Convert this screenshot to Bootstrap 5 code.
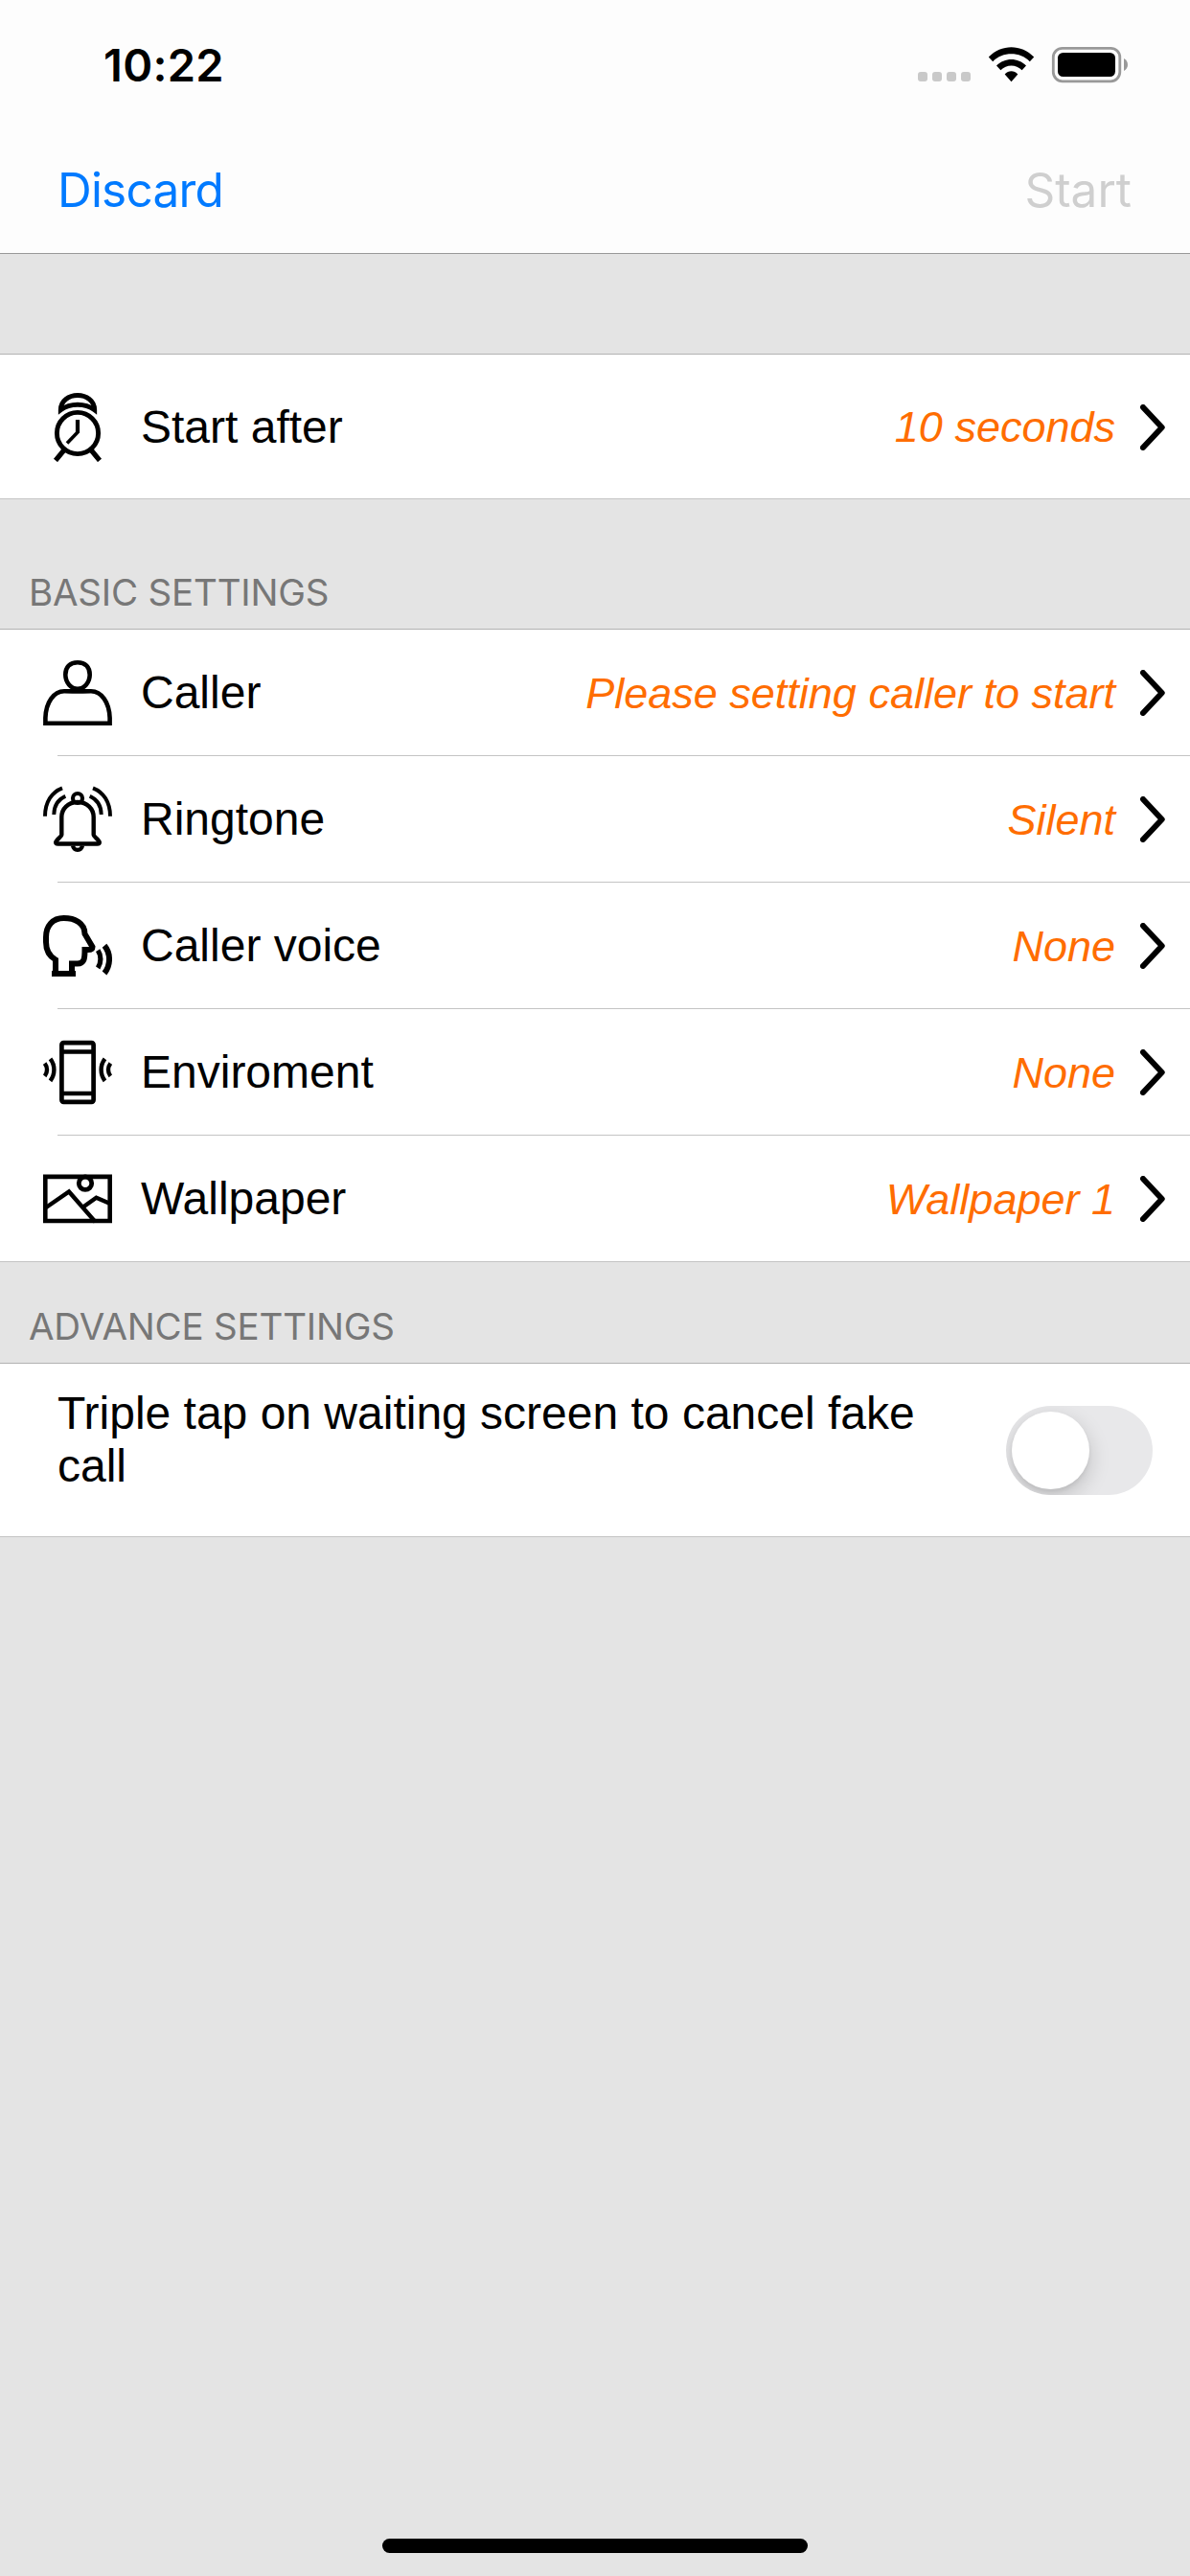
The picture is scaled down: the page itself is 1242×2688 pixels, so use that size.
<!DOCTYPE html>
<html lang="en">
<head>
<meta charset="utf-8">
<meta name="viewport" content="width=device-width, initial-scale=1">
<title>Fake Call</title>
<link href="https://cdn.jsdelivr.net/npm/bootstrap@5.3.0/dist/css/bootstrap.min.css" rel="stylesheet">
<style>
body{background:#e4e4e4;font-family:"Liberation Sans",Arial,sans-serif;color:#000;font-size:48px;line-height:55px}
.screen{width:1242px;height:2688px;overflow:hidden}
.top-area{height:265px;background:#fdfdfd;border-bottom:1px solid #999;font-family:Inter,sans-serif}
.status{height:132px;padding:0 64px 0 108px}
.clock-time{font-size:47px;font-weight:600;line-height:56px;padding-top:40px;letter-spacing:.3px}
.status svg{display:block;margin-top:43px}
.actions{height:132px;padding:0 61px 0 60px;font-size:49.5px;line-height:60px}
.actions button{padding-top:36px;line-height:60px;border:0;background:none}
.discard{color:#007aff;letter-spacing:-.8px}
.start{color:#cfcfcf}
.group-box{background:#fff;border-top:1px solid #b2b2b2;border-bottom:1px solid #c4c4c4}
.gap-top{margin-top:104px}
.item{height:131px;padding:0 26px 0 45px}
.item.tall{height:150px}
.item svg{flex:none;fill:none;stroke:#000}
.ico{margin-top:1px}
.tall .ico{margin-top:2px}
.chev{margin-top:1px;margin-left:26px}
.tall .chev{margin-top:2px}
.item-label{margin-left:30px;white-space:nowrap}
.item-value{color:#ff6d00;font-style:italic;font-size:45px;line-height:52px;white-space:nowrap;padding-top:2px}
.rule{height:1px;margin-left:60px;background:#c4c4c4}
.section-title{font:400 38.5px/46px Inter,sans-serif;letter-spacing:-.2px;color:#777;padding:0 0 0 30px;margin:0;white-space:nowrap}
.title-basic{height:135px;padding-top:74px}
.title-advance{height:105px;padding-top:44px}
.toggle-row{height:180px;padding:24px 39px 0 60px}
.toggle-row p{width:920px}
.toggle{width:153px;height:93px;border-radius:47px;background:#e8e8ea;padding:6px;margin-top:20px;overflow:hidden}
.knob{width:81px;height:81px;border-radius:50%;background:#fff;box-shadow:0 8px 22px rgba(0,0,0,.18),0 3px 4px rgba(0,0,0,.06)}
.home-bar{width:444px;height:15px;border-radius:8px;background:#000;margin-bottom:24px}
</style>
<script src="https://cdn.jsdelivr.net/npm/bootstrap@5.3.0/dist/js/bootstrap.bundle.min.js"></script>
</head>
<body>
<svg width="0" height="0" class="d-none">
  <symbol id="chev" viewBox="0 0 26 48"><path d="M3 3 22.700 24 3 45" stroke-width="6" stroke-linecap="round" stroke-linejoin="round"/></symbol>
</svg>
<div class="screen d-flex flex-column">
  <header class="top-area">
    <div class="status d-flex justify-content-between">
      <div class="clock-time">10:22</div>
      <svg width="222" height="50" viewBox="956 43 222 50">
        <g fill="#c9c9c9"><rect x="958" y="75" width="10" height="10" rx="3"/><rect x="973" y="75" width="10" height="10" rx="3"/><rect x="988" y="75" width="10" height="10" rx="3"/><rect x="1003" y="75" width="10" height="10" rx="3"/></g>
        <path d="M1031.800 59.500C1045 45.700 1066 45.700 1079.200 59.500L1074.800 64.300C1064.500 53.700 1046.500 53.700 1036.200 64.300Z"/>
        <path d="M1040 68.500C1048.500 59.700 1062.500 59.700 1071 68.500L1066.600 73.300C1060.500 67 1050.500 67 1044.400 73.300Z"/>
        <path d="M1048.700 77.600C1052.600 73.200 1058.400 73.200 1062.300 77.600L1055.500 85.300Z"/>
        <rect x="1099.300" y="50.300" width="69.500" height="34.500" rx="9.500" fill="none" stroke="#999" stroke-width="2.800"/>
        <rect x="1104" y="55" width="60" height="25" rx="5.500"/>
        <path d="M1173 61C1178.300 63.500 1178.300 71.500 1173 74Z" fill="#999"/>
      </svg>
    </div>
    <div class="actions d-flex justify-content-between align-items-start">
      <button class="discard pe-0 ps-0 pb-0" type="button">Discard</button>
      <button class="start pe-0 ps-0 pb-0" type="button" disabled>Start</button>
    </div>
  </header>

  <section class="group-box gap-top">
    <div class="item tall d-flex align-items-center">
      <svg class="ico" width="72" height="72" viewBox="0 0 72 72" stroke-width="4.900">
        <circle cx="36" cy="42" r="21.600"/>
        <path d="M18.300 17.800C18.300 8 27 2.500 36 2.500S53.700 8 53.700 17.800C48 13.500 42 12.200 36 12.200S24 13.500 18.300 17.800Z"/>
        <path d="M36 28V41" stroke-width="4.200"/><path d="M37 40 25 52.500" stroke-width="3.600"/>
        <path d="M22 59.500 13 70.500M50 59.500 59 70.500" stroke-width="5.200"/>
      </svg>
      <span class="item-label">Start after</span>
      <span class="item-value ms-auto">10 seconds</span>
      <svg class="chev" width="26" height="48"><use href="#chev"/></svg>
    </div>
  </section>

  <h2 class="section-title title-basic">BASIC SETTINGS</h2>
  <section class="group-box">
    <div class="item d-flex align-items-center">
      <svg class="ico" width="72" height="72" viewBox="0 0 72 72" stroke-width="4.600">
        <path d="M36 4.200C28 4.200 23.300 9 23.300 17 23.300 25 29 31.800 36 31.800S48.700 25 48.700 17C48.700 9 44 4.200 36 4.200Z"/>
        <path d="M2.400 67.800V62C3 46 11 34.300 22 34.300 28 34.300 32 34.500 36 34.500S44 34.300 50 34.300C61 34.300 69 46 69.600 62V67.800Z"/>
      </svg>
      <span class="item-label">Caller</span>
      <span class="item-value ms-auto">Please setting caller to start</span>
      <svg class="chev" width="26" height="48"><use href="#chev"/></svg>
    </div>
    <div class="rule"></div>
    <div class="item d-flex align-items-center">
      <svg class="ico" width="72" height="72" viewBox="0 0 72 72" stroke-width="4.400">
        <path d="M20 3.300C9 7.500 2 18 2 32.700M52 3.300C63 7.500 70 18 70 32.700" stroke-width="4"/>
        <path d="M23.300 11.700C16 15 11.300 22 11.300 31M48.700 11.700C56 15 60.700 22 60.700 31" stroke-width="3.900"/>
        <circle cx="36" cy="14" r="5" stroke-width="4.200"/>
        <path d="M36 18C26 18 19.300 25 19.300 33.500V52C19.300 54 13.200 57.500 13.200 60 13.200 61.300 14 61.500 15.500 61.500H56.500C58 61.500 58.800 61.300 58.800 60 58.800 57.500 52.700 54 52.700 52V33.500C52.700 25 46 18 36 18Z"/>
        <path d="M31 63.500C32 69.300 40 69.300 41 63.500" stroke-width="4.200"/>
      </svg>
      <span class="item-label">Ringtone</span>
      <span class="item-value ms-auto">Silent</span>
      <svg class="chev" width="26" height="48"><use href="#chev"/></svg>
    </div>
    <div class="rule"></div>
    <div class="item d-flex align-items-center">
      <svg class="ico" width="72" height="72" viewBox="0 0 72 72" stroke-width="6">
        <path d="M9 65H34M13 65V50.500C6 46.500 3 41 3 32V27C3 15 10 7 21.500 7 33 7 43.500 12 43.500 23.500L51.500 37C51.500 39.500 50 40 47 40H43.500C43.500 49 43 54.500 36 54.500H30V65"/>
        <path d="M57.200 40.600C60.800 46 60.800 53.500 57.200 59" stroke-width="5.200"/><path d="M64 35.800C70.700 43.800 70.700 56.200 64 64.500" stroke-width="6"/>
      </svg>
      <span class="item-label">Caller voice</span>
      <span class="item-value ms-auto">None</span>
      <svg class="chev" width="26" height="48"><use href="#chev"/></svg>
    </div>
    <div class="rule"></div>
    <div class="item d-flex align-items-center">
      <svg class="ico" width="72" height="72" viewBox="0 0 72 72" stroke-width="4.700">
        <rect x="19.400" y="5.200" width="33.200" height="61.600" rx="2"/>
        <path d="M19 14.500H53M19 58H53"/>
        <path d="M7.500 21.800C12.700 28.500 12.700 38 7.500 44.800M64.500 21.800C59.300 28.500 59.300 38 64.500 44.800" stroke-width="4.400"/>
        <path d="M1.700 26.500C4.800 30.500 4.800 36 1.700 39.800M70.300 26.500C67.200 30.500 67.200 36 70.300 39.800" stroke-width="4.400"/>
      </svg>
      <span class="item-label">Enviroment</span>
      <span class="item-value ms-auto">None</span>
      <svg class="chev" width="26" height="48"><use href="#chev"/></svg>
    </div>
    <div class="rule"></div>
    <div class="item d-flex align-items-center">
      <svg class="ico" width="72" height="72" viewBox="0 0 72 72" stroke-width="4.400">
        <path d="M2.300 12.900H69.700V59H2.300Z" stroke-width="4.600"/>
        <circle cx="44" cy="19.700" r="6.700" stroke-width="4.800"/>
        <path d="M3 45 27 28.500 54.500 60M42.500 44 55.500 34.700 70 41"/>
      </svg>
      <span class="item-label">Wallpaper</span>
      <span class="item-value ms-auto">Wallpaper 1</span>
      <svg class="chev" width="26" height="48"><use href="#chev"/></svg>
    </div>
  </section>

  <h2 class="section-title title-advance">ADVANCE SETTINGS</h2>
  <section class="group-box">
    <div class="toggle-row d-flex justify-content-between align-items-start">
      <p class="mb-0">Triple tap on waiting screen to cancel fake call</p>
      <div class="toggle" role="switch" aria-checked="false"><div class="knob"></div></div>
    </div>
  </section>
  <div class="home-bar mt-auto mx-auto"></div>
</div>
</body>
</html>
